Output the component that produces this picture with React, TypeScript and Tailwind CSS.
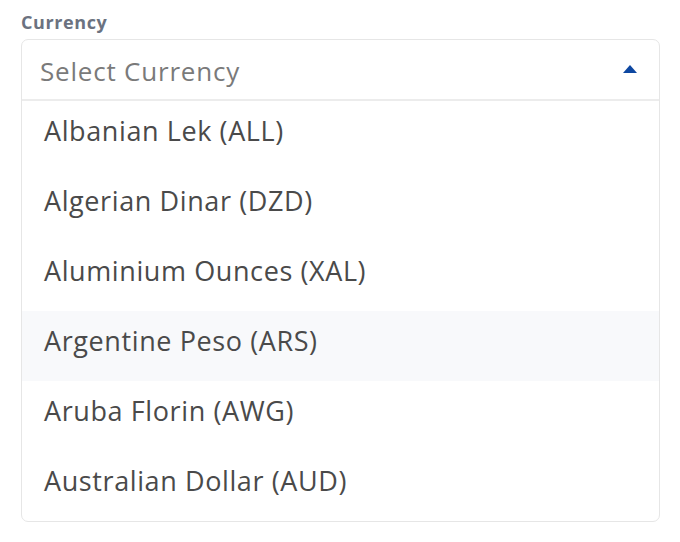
const currencies = [
  "Albanian Lek (ALL)",
  "Algerian Dinar (DZD)",
  "Aluminium Ounces (XAL)",
  "Argentine Peso (ARS)",
  "Aruba Florin (AWG)",
  "Australian Dollar (AUD)",
];

export default function App() {
  const highlighted = 3;
  return (
    <div
      className="w-[680px] h-[542px] bg-white px-[21px] pt-[10px]"
      style={{ fontFamily: '"Open Sans", "Noto Sans", sans-serif' }}
    >
      <label className="block text-[18px] leading-[24px] font-bold tracking-[0.6px] text-[#6b7280] mb-[5px]">
        Currency
      </label>
      <div className="w-[639px] rounded-[7px] border border-[#e6e6e6] overflow-hidden">
        <div className="h-[61px] flex items-center justify-between pl-[18px] pr-[22px] border-b-2 border-[#ececec]">
          <span className="text-[26px] leading-[36px] tracking-[0.8px] text-[#7a7a7a] mt-[2px]">
            Select Currency
          </span>
          <svg width="14" height="8" viewBox="0 0 14 8" className="mt-[-2px]">
            <path d="M7 0 L14 8 L0 8 Z" fill="#0d47a1" />
          </svg>
        </div>
        <ul>
          {currencies.map((c, i) => (
            <li
              key={c}
              className={`h-[70px] flex items-center pl-[22px] pb-[10px] text-[27px] leading-[36px] tracking-[0.6px] text-[#4a4a4a] ${
                i === highlighted ? "bg-[#f8f9fb]" : ""
              }`}
            >
              {c}
            </li>
          ))}
        </ul>
      </div>
    </div>
  );
}
